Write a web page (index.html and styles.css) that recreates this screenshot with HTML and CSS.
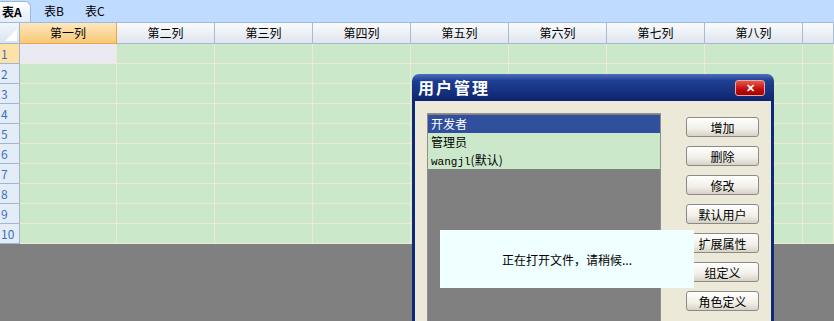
FILE: index.html
```html
<!DOCTYPE html>
<html lang="zh">
<head>
    <meta charset="UTF-8">
    <title>表格</title>
    <link rel="stylesheet" href="styles.css">
</head>
<body>
    <div class="tabs">
        <div class="tab active">表A</div>
        <div class="tab">表B</div>
        <div class="tab">表C</div>
    </div>

    <div class="sheet">
        <div class="corner"><span class="corner-mark"></span></div>
        <div class="col-head current">第一列</div>
        <div class="col-head">第二列</div>
        <div class="col-head">第三列</div>
        <div class="col-head">第四列</div>
        <div class="col-head">第五列</div>
        <div class="col-head">第六列</div>
        <div class="col-head">第七列</div>
        <div class="col-head">第八列</div>
        <div class="col-head"></div>
    </div>
    <div class="sheet rows" id="rows"></div>

    <div class="dialog">
        <div class="dialog-title">
            <span>用户管理</span>
            <button class="close-btn">✕</button>
        </div>
        <div class="dialog-body">
            <div class="user-list">
                <div class="user-item selected">开发者</div>
                <div class="user-item">管理员</div>
                <div class="user-item"><span class="mono">wangjl</span>(默认)</div>
            </div>
            <div class="actions">
                <button class="btn">增加</button>
                <button class="btn">删除</button>
                <button class="btn">修改</button>
                <button class="btn">默认用户</button>
                <button class="btn">扩展属性</button>
                <button class="btn">组定义</button>
                <button class="btn">角色定义</button>
            </div>
        </div>
    </div>

    <div class="loading">正在打开文件，请稍候...</div>

    <script>
        // 生成表格行
        const rows = document.getElementById('rows');
        for (let r = 1; r <= 10; r++) {
            const head = document.createElement('div');
            head.className = r === 1 ? 'row-head current' : 'row-head';
            head.textContent = r;
            rows.appendChild(head);
            for (let c = 0; c < 9; c++) {
                const cell = document.createElement('div');
                cell.className = (r === 1 && c === 0) ? 'cell active' : 'cell';
                rows.appendChild(cell);
            }
        }
    </script>
</body>
</html>
```

FILE: styles.css
```css
body {
    margin: 0;
    width: 834px;
    height: 321px;
    overflow: hidden;
    background: #808080;
    font-family: "Noto Sans CJK SC", "DejaVu Sans", sans-serif;
    font-size: 12px;
    color: #000;
    position: relative;
}

.tabs {
    height: 23px;
    background: #bfdbff;
    display: flex;
    align-items: flex-end;
    border-bottom: 1px solid #9db9dc;
    box-sizing: border-box;
}

.tab {
    height: 21px;
    line-height: 20px;
    padding: 0 21px 0 0;
    font-size: 12px;
}

.tab.active {
    width: 31px;
    box-sizing: border-box;
    padding: 0 0 0 2px;
    font-weight: bold;
    background: linear-gradient(#ffffff, #e3ecf8);
    border: 1px solid #9db9dc;
    border-left: none;
    border-bottom: none;
    border-radius: 0 6px 0 0;
    margin-right: 13px;
}

.sheet {
    display: grid;
    grid-template-columns: 20px 97px repeat(7, 98px) 31px;
}

.corner {
    height: 21px;
    background: linear-gradient(#f2f6fb, #d9e4f2);
    border-right: 1px solid #9eb6d0;
    border-bottom: 1px solid #9eb6d0;
    box-sizing: border-box;
    position: relative;
}

.corner-mark {
    position: absolute;
    right: 2px;
    bottom: 2px;
    width: 0;
    height: 0;
    border-left: 12px solid transparent;
    border-bottom: 12px solid #ffffff;
}

.col-head {
    height: 21px;
    line-height: 20px;
    text-align: center;
    background: linear-gradient(#fafbfd, #dfe5ee);
    border-right: 1px solid #a5bbd6;
    border-bottom: 1px solid #a3b9d4;
    box-sizing: border-box;
}

.col-head.current {
    background: linear-gradient(#fde8bd, #f8c878);
    border-bottom: 1px solid #f2a53a;
    border-right-color: #f2a53a;
}

.rows {
    grid-auto-rows: 20px;
}

.row-head {
    background: #e4ecf7;
    color: #3a72bd;
    padding-left: 1px;
    line-height: 19px;
    border-right: 1px solid #9eb6d0;
    border-bottom: 1px solid #9eb6d0;
    box-sizing: border-box;
}

.row-head.current {
    background: #fde1a6;
}

.cell {
    background: #cce8ca;
    border-right: 1px solid #efead2;
    border-bottom: 1px solid #efead2;
    box-sizing: border-box;
}

.cell.active {
    background: #eae9f4;
}

.dialog {
    position: absolute;
    left: 412px;
    top: 74px;
    width: 362px;
    height: 247px;
    display: flex;
    flex-direction: column;
    overflow: hidden;
}

.dialog-title {
    height: 27px;
    flex-shrink: 0;
    background: linear-gradient(#4d6fc0 0%, #1f3f92 25%, #142f7e 70%, #0d2469 100%);
    border-radius: 7px 7px 0 0;
    color: #ffffff;
    font-size: 16px;
    font-weight: bold;
    letter-spacing: 2px;
    padding-left: 6px;
    line-height: 27px;
    position: relative;
}

.close-btn {
    position: absolute;
    left: 323px;
    top: 6px;
    width: 30px;
    height: 16px;
    padding: 0;
    border: 1px solid #e8a8a0;
    border-radius: 3px;
    background: linear-gradient(#e8584a, #c00c0c 60%, #a00000);
    color: #ffffff;
    font-size: 11px;
    font-weight: bold;
    line-height: 13px;
    letter-spacing: 0;
}

.dialog-body {
    flex: 1;
    background: #ece9d8;
    border-left: 3px solid #0d2a78;
    border-right: 3px solid #0d2a78;
    display: flex;
    padding: 12px 0 0 12px;
}

.user-list {
    width: 234px;
    background: #808080;
    border: 1px solid #8f8f8f;
    border-bottom: none;
    box-sizing: border-box;
    padding-top: 1px;
}

.user-item {
    height: 18px;
    line-height: 18px;
    padding-left: 3px;
    background: #cce8ca;
    font-size: 12px;
}

.user-item.selected {
    background: #30509d;
    color: #ffffff;
}

.mono {
    font-family: "Liberation Mono", monospace;
    font-size: 11px;
}

.actions {
    display: flex;
    flex-direction: column;
    gap: 9px;
    margin-left: 25px;
    padding-top: 4px;
}

.btn {
    width: 73px;
    height: 20px;
    padding: 0;
    font-family: inherit;
    font-size: 12px;
    color: #000;
    background: linear-gradient(#ffffff, #f1efe8 60%, #d8d2c5);
    border: 1px solid #8a8a8a;
    border-radius: 3px;
}

.loading {
    position: absolute;
    left: 440px;
    top: 230px;
    width: 254px;
    height: 58px;
    background: #f0ffff;
    display: flex;
    align-items: center;
    justify-content: center;
    font-size: 12px;
}
```
